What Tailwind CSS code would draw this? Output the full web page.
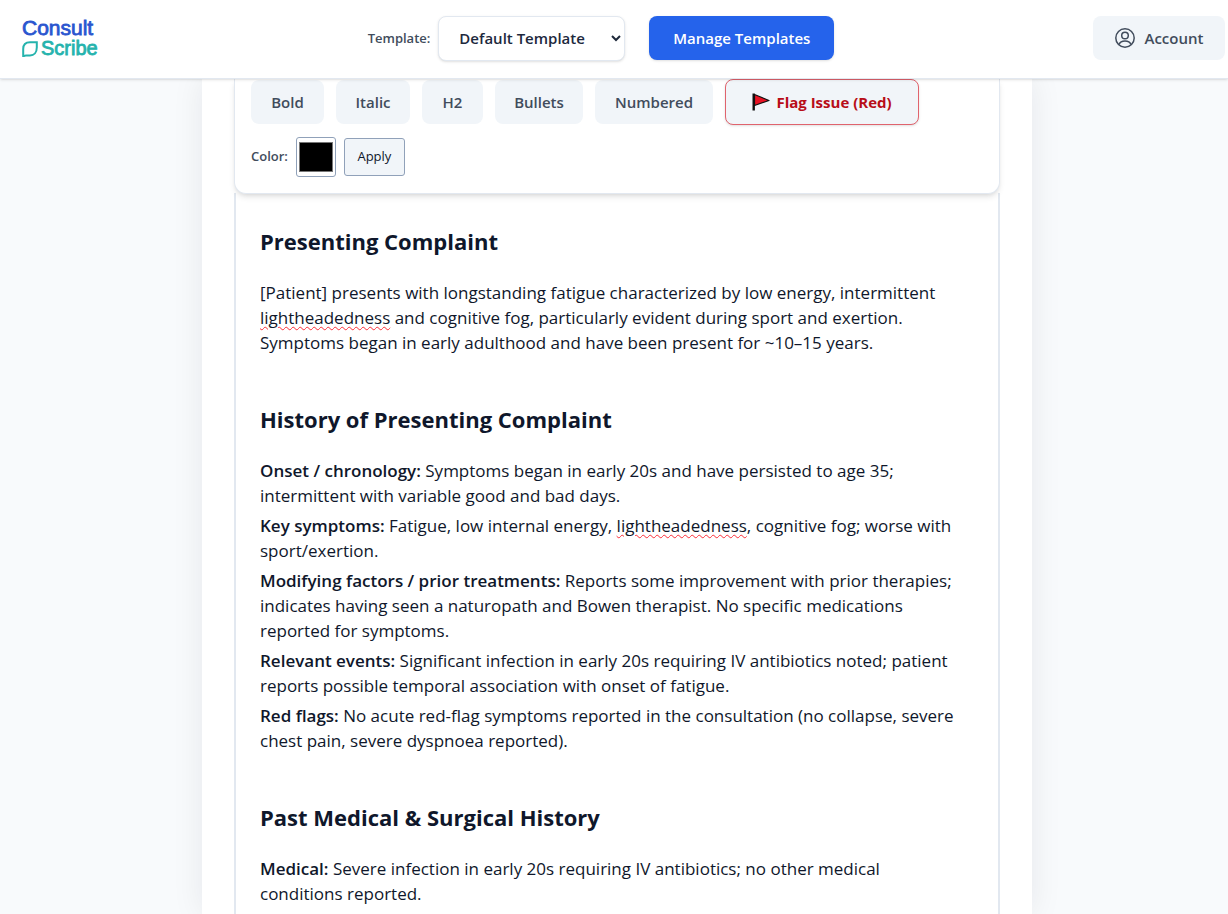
<!DOCTYPE html>
<html lang="en">
<head>
  <meta charset="UTF-8">
  <meta name="viewport" content="width=device-width, initial-scale=1.0">
  <title>Consult Scribe</title>
  <script src="https://cdn.jsdelivr.net/npm/@tailwindcss/browser@4"></script>
</head>
<body class="min-h-screen flex flex-col bg-[#f8fafc] font-['Open_Sans',sans-serif] text-slate-900">

  <header class="sticky top-0 z-20 h-[79px] shrink-0 flex items-start justify-between bg-white border-b border-slate-200 shadow-sm pl-[22px] pr-[3px] pt-4">
    <a href="#" class="w-[87px] flex flex-col font-['Liberation_Sans',sans-serif] leading-[21px] pt-px">
      <span class="text-[21px] text-[#2a55cf] [-webkit-text-stroke:0.8px_#2a55cf]">Consult</span>
      <span class="flex items-center gap-[3px] text-[20px] text-[#25b3ad] [-webkit-text-stroke:0.8px_#25b3ad]">
        <svg class="w-4 h-4" viewBox="0 0 16 16" fill="none" stroke="currentColor" stroke-width="2"><path d="M1.200 16V8C1.200 3.500 4 1.200 8 1.200H14.800V6.500C14.800 11.500 12 14.500 8 14.500H4C2.500 14.500 1.500 15 1.200 16"/></svg>
        Scribe
      </span>
    </a>

    <div class="flex items-start">
      <label for="template" class="text-[13px] leading-[44px] font-semibold text-[#414c5c] mr-2">Template:</label>
      <div class="relative mr-6">
        <select id="template" class="appearance-none w-[187px] h-[45px] rounded-lg border border-slate-200 bg-white shadow-sm pl-5 text-[15px] font-semibold text-slate-800">
          <option>Default Template</option>
        </select>
        <svg class="absolute right-1 top-[19px] w-[10px] h-[7px] pointer-events-none" viewBox="0 0 10 7" fill="none" stroke="#1e293b" stroke-width="2"><path d="M1 1l4 4 4-4"/></svg>
      </div>
      <button class="w-[185px] h-11 rounded-lg bg-[#2563eb] shadow text-[15px] font-semibold text-white">Manage Templates</button>
    </div>

    <button class="w-[132px] h-11 rounded-lg bg-slate-100 flex items-center justify-center gap-[10px] text-[15px] font-semibold text-[#414c5c]">
      <svg class="w-5 h-5" viewBox="0 0 20 20" fill="none" stroke="currentColor" stroke-width="1.500"><circle cx="10" cy="10" r="9.200"/><circle cx="10" cy="7.500" r="3.300"/><path d="M4 16.500C5 13.800 7.500 13 10 13s5 .8 6 3.500"/></svg>
      Account
    </button>
  </header>

  <main class="grow flex flex-col w-full max-w-[836px] mx-auto pl-[6px] -mt-px">
    <div class="grow flex flex-col bg-white px-8 shadow-[0_0_30px_rgba(15,23,42,0.08)]">

      <div class="sticky top-[79px] z-10 rounded-b-xl border border-t-0 border-slate-200 bg-white shadow-md px-4 pb-4">
        <div class="flex flex-wrap items-center gap-3 text-[15px] font-semibold text-[#414c5c]">
          <button class="w-[73px] h-11 rounded-lg bg-slate-100">Bold</button>
          <button class="w-[74px] h-11 rounded-lg bg-slate-100">Italic</button>
          <button class="w-[61px] h-11 rounded-lg bg-slate-100">H2</button>
          <button class="w-[88px] h-11 rounded-lg bg-slate-100">Bullets</button>
          <button class="w-[118px] h-11 rounded-lg bg-slate-100">Numbered</button>
          <button class="w-[194px] h-[46px] flex items-center justify-center gap-[6px] rounded-lg border border-[#e0636d] bg-slate-100 shadow-sm font-bold text-[#b80d18]">
            <svg class="w-[18px] h-[18px]" viewBox="0 0 18 18"><path d="M2.500 1.500L17 7.500 2.500 12.500z" fill="#e81224" stroke="#111" stroke-width="1.200" stroke-linejoin="round"/><path d="M1.700 0.500v17" stroke="#111" stroke-width="2.400"/></svg>
            Flag Issue (Red)
          </button>
        </div>
        <div class="flex items-center gap-2 mt-3">
          <label for="color" class="text-[13px] font-semibold text-[#414c5c]">Color:</label>
          <input id="color" type="color" value="#000000" class="w-10 h-10 rounded-[3px] border border-slate-400 bg-white">
          <button class="w-[61px] h-[38px] rounded-[3px] border border-slate-400 bg-slate-100 text-[13px] text-slate-900">Apply</button>
        </div>
      </div>

      <article class="grow border-x-2 border-slate-200 pl-6 pr-9 pt-8 pb-2 text-[17px] leading-[25px]">
        <h2 class="text-[22px] leading-[32px] font-bold">Presenting Complaint</h2>
        <p class="mt-[23px]">[Patient] presents with longstanding fatigue characterized by low energy, intermittent <span class="underline decoration-wavy decoration-1 decoration-red-500 underline-offset-2">lightheadedness</span> and cognitive fog, particularly evident during sport and exertion. Symptoms began in early adulthood and have been present for ~10–15 years.</p>

        <h2 class="mt-12 text-[22px] leading-[32px] font-bold">History of Presenting Complaint</h2>
        <div class="mt-[23px] flex flex-col gap-[5px]">
          <p><strong class="font-semibold">Onset / chronology:</strong> Symptoms began in early 20s and have persisted to age 35; intermittent with variable good and bad days.</p>
          <p><strong class="font-semibold">Key symptoms:</strong> Fatigue, low internal energy, <span class="underline decoration-wavy decoration-1 decoration-red-500 underline-offset-2">lightheadedness</span>, cognitive fog; worse with sport/exertion.</p>
          <p><strong class="font-semibold">Modifying factors / prior treatments:</strong> Reports some improvement with prior therapies; indicates having seen a naturopath and Bowen therapist. No specific medications reported for symptoms.</p>
          <p><strong class="font-semibold">Relevant events:</strong> Significant infection in early 20s requiring IV antibiotics noted; patient reports possible temporal association with onset of fatigue.</p>
          <p><strong class="font-semibold">Red flags:</strong> No acute red-flag symptoms reported in the consultation (no collapse, severe chest pain, severe dyspnoea reported).</p>
        </div>

        <h2 class="mt-12 text-[22px] leading-[32px] font-bold">Past Medical &amp; Surgical History</h2>
        <p class="mt-[23px]"><strong class="font-semibold">Medical:</strong> Severe infection in early 20s requiring IV antibiotics; no other medical conditions reported.</p>
      </article>
    </div>
  </main>

</body>
</html>
